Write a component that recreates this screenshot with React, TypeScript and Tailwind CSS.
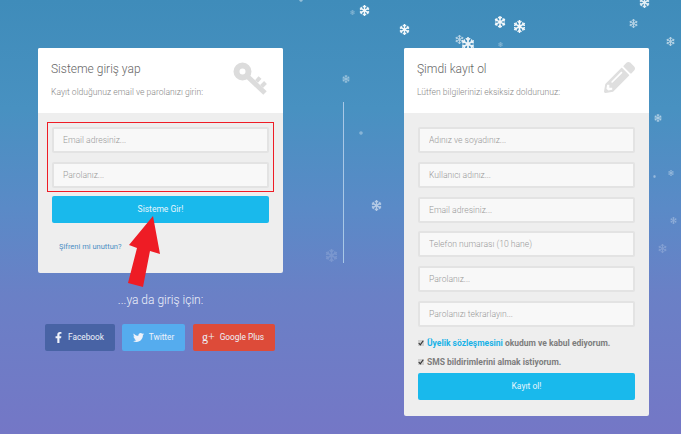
import React from "react";
import { FaFacebookF, FaTwitter, FaPencilAlt, FaSnowflake } from "react-icons/fa";

const flakes: [number, number, number, number][] = [
  [364, 10, 11, 0.95], [352, 12, 5, 0.35], [404, 29, 11, 0.95], [500, 22, 12, 0.95], [519, 26, 13, 0.95],
  [633, 23, 9, 0.6], [644, 2, 11, 0.85], [670, 41, 9, 0.6], [459, 39, 9, 0.6], [468, 44, 14, 0.9],
  [500, 44, 5, 0.35], [346, 79, 8, 0.45], [361, 133, 4, 0.45], [376, 205, 11, 0.55], [658, 118, 8, 0.55],
  [654, 176, 3, 0.5], [671, 173, 6, 0.4], [673, 220, 7, 0.3], [662, 248, 9, 0.2], [331, 255, 13, 0.15],
  [301, 0, 4, 0.6],
];

const font = { fontFamily: "Roboto, sans-serif" };

function Field({ placeholder }: { placeholder: string }) {
  return (
    <input
      readOnly
      placeholder={placeholder}
      className="block w-full h-[26px] rounded-[2px] border-2 border-[#e3e3e3] bg-[#f8f8f8] pl-[9px] text-[8.6px] font-light outline-none placeholder:text-[#999]"
    />
  );
}

function Head({ title, sub, icon }: { title: string; sub: string; icon: React.ReactNode }) {
  return (
    <div className="h-[65px] bg-white pl-[13px] pr-[14px] pt-[14px] flex justify-between rounded-t-[2px]">
      <div>
        <div className="text-[12px] leading-[14px] font-light text-[#666]">{title}</div>
        <div className="mt-[10px] text-[8.6px] leading-[12px] font-light text-[#888]">{sub}</div>
      </div>
      {icon}
    </div>
  );
}

function Key() {
  return (
    <svg width="36" height="34" viewBox="0 0 36 34" fill="none" stroke="#dcdcdc">
      <circle cx="9.5" cy="9.5" r="6" strokeWidth="6" />
      <path d="M14 14 L32 31" strokeWidth="5" />
      <path d="M23.5 19.5 L27 15.5 M28.5 24.5 L32.5 20.5" strokeWidth="4" />
    </svg>
  );
}

function Social({ bg, w, gap, icon, label }: { bg: string; w: string; gap: string; icon: React.ReactNode; label: string }) {
  return (
    <div className={`${bg} ${w} ${gap} h-[27px] rounded-[2px] flex items-center justify-center text-[8.3px] text-[#eef2fa]`}>
      {icon}
      <span>{label}</span>
    </div>
  );
}

function Check({ children }: { children: React.ReactNode }) {
  return (
    <div className="flex items-center gap-[3px] h-[12px] text-[8.5px] font-bold text-[#7d7d7d] whitespace-nowrap">
      <span className="w-[6px] h-[6px] bg-[#cfcfcf] flex items-center justify-center">
        <svg width="6" height="6" viewBox="0 0 8 8"><path d="M1 4 L3 6.5 L7 1" fill="none" stroke="#333" strokeWidth="1.6" /></svg>
      </span>
      <span>{children}</span>
    </div>
  );
}

export default function App() {
  return (
    <div
      style={font}
      className="relative w-[681px] h-[434px] overflow-hidden flex pt-[48px] pl-[38px] items-start bg-[linear-gradient(180deg,#3f8cba_0%,#4891c1_25%,#5a8ac7_48%,#6a80c6_68%,#7477c6_100%)]"
    >
      {flakes.map(([x, y, s, o], i) => (
        <FaSnowflake
          key={i}
          size={s}
          color="#fff"
          className="absolute"
          style={{ left: x - s / 2, top: y - s / 2, opacity: o }}
        />
      ))}

      <div className="relative w-[245px] shrink-0">
        <div className="rounded-[2px] bg-[#eeeeee]">
          <Head title="Sisteme giriş yap" sub="Kayıt olduğunuz email ve parolanızı girin:" icon={<Key />} />
          <div className="h-[160px] px-[14px] pt-[14px]">
            <div className="flex flex-col gap-[8.8px]">
              <Field placeholder="Email adresiniz..." />
              <Field placeholder="Parolanız..." />
            </div>
            <div className="mt-[8px] h-[27px] rounded-[2px] bg-[#19b9ec] flex items-center justify-center text-[8.5px] text-[#e4f6fd]">
              Sisteme Gir!
            </div>
            <div className="mt-[18px] pl-[7px] text-[7.5px] leading-[12px] text-[#4d8fc4]">Şifreni mi unuttun?</div>
          </div>
        </div>
        <div className="mt-[19px] text-center text-[12px] leading-[16px] font-light text-[#eef1fa]">...ya da giriş için:</div>
        <div className="mt-[16px] ml-[7px] flex gap-[8px]">
          <Social bg="bg-[#4863a5] pr-[3px]" w="w-[70px]" gap="gap-[4px]" label="Facebook" icon={<FaFacebookF size={11} />} />
          <div className="-ml-px">
            <Social bg="bg-[#55acee]" w="w-[63px]" gap="gap-[5px]" label="Twitter" icon={<FaTwitter size={11} />} />
          </div>
          <Social
            bg="bg-[#dd4b39] pr-[2px]"
            w="w-[82px]"
            gap="gap-[5px]"
            label="Google Plus"
            icon={<span className="text-[12px] leading-[12px] -mt-[2px]" style={{ fontFamily: "'Liberation Serif', serif" }}>g+</span>}
          />
        </div>
        <div className="absolute left-[9px] top-[74px] w-[227px] h-[70px] border border-[#ee1c25]" />
      </div>

      <div className="ml-[60px] mt-[54px] w-px h-[161px] bg-[#a9c8e6] shrink-0" />

      <div className="relative ml-[60px] w-[245px] shrink-0 rounded-[2px] bg-[#eeeeee] h-[368px]">
        <Head title="Şimdi kayıt ol" sub="Lütfen bilgilerinizi eksiksiz doldurunuz:" icon={<FaPencilAlt size={31} color="#dfdfdf" />} />
        <div className="px-[14px] pt-[14px]">
          <div className="flex flex-col gap-[8.8px]">
            <Field placeholder="Adınız ve soyadınız..." />
            <Field placeholder="Kullanıcı adınız..." />
            <Field placeholder="Email adresiniz..." />
            <Field placeholder="Telefon numarası (10 hane)" />
            <Field placeholder="Parolanız..." />
            <Field placeholder="Parolanızı tekrarlayın..." />
          </div>
          <div className="mt-[10px] flex flex-col gap-[7px]">
            <Check><span className="text-[#19b2e6]">Üyelik sözleşmesini</span> okudum ve kabul ediyorum.</Check>
            <Check>SMS bildirimlerini almak istiyorum.</Check>
          </div>
          <div className="mt-[5px] h-[27px] rounded-[2px] bg-[#19b9ec] flex items-center justify-center text-[8.5px] text-[#e4f6fd]">
            Kayıt ol!
          </div>
        </div>
      </div>

      <svg className="absolute left-[120px] top-[210px]" width="50" height="80" viewBox="120 210 50 80">
        <polygon points="153,216 129,245 137,248 128,283 143,287 150,251 160,254" fill="#ee1c25" />
      </svg>
    </div>
  );
}
